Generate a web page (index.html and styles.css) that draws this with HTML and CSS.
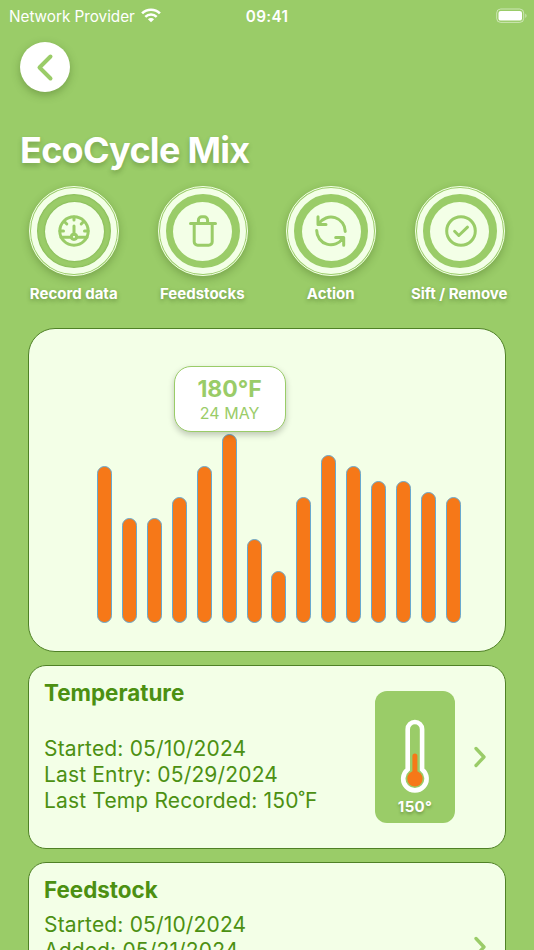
FILE: index.html
```html
<!DOCTYPE html>
<html lang="en">
<head>
  <meta charset="UTF-8" />
  <meta name="viewport" content="width=device-width, initial-scale=1.0"/>
  <title>EcoCycle Mix</title>
  <link rel="stylesheet" href="styles.css">
</head>
<body>

  <div class="status-bar">
    <div class="provider">
      <span>Network Provider</span>
      <svg class="wifi" viewBox="0 0 20 15" width="20" height="15">
        <path d="M1.1 5.4a12.7 12.7 0 0 1 17.8 0" fill="none" stroke="#fff" stroke-width="2.7"/>
        <path d="M4.3 8.8a8.2 8.2 0 0 1 11.4 0" fill="none" stroke="#fff" stroke-width="2.5"/>
        <path d="M10 14.3 6.9 11.3a4.4 4.4 0 0 1 6.2 0z" fill="#fff"/>
      </svg>
    </div>
    <div class="time">09:41</div>
    <svg class="battery" viewBox="0 0 32 16" width="32" height="16">
      <rect x="0.7" y="1" width="27" height="13.4" rx="4" fill="none" stroke="#fff" stroke-opacity=".5"/>
      <rect x="2.5" y="2.9" width="23.5" height="9.7" rx="2.2" fill="#fff"/>
      <path d="M29.3 5.5v4.4c1.7-.7 1.7-3.7 0-4.4z" fill="#fff" fill-opacity=".5"/>
    </svg>
  </div>

  <button class="back" aria-label="Back">
    <svg viewBox="0 0 50 50" width="50" height="50"><path d="M30.5 14.5 19.5 25.5 30.5 36.5"/></svg>
  </button>

  <h1>EcoCycle Mix</h1>

  <div class="actions">
    <div class="action">
      <div class="dial pressed"><div class="ring"><div class="disc">
        <svg class="icon" viewBox="0 0 32 32">
          <circle cx="16" cy="16" r="14.2"/>
          <path d="M3 22.2h10.3M18.7 22.2H29M16 11v8.5M16 2v3M6.8 7l2 2M25.2 7l-2 2M2 16h3.5M30 16h-3.5"/>
          <circle cx="16" cy="21.8" r="2.6"/>
        </svg>
      </div></div></div>
      <span>Record data</span>
    </div>
    <div class="action">
      <div class="dial"><div class="ring"><div class="disc">
        <svg class="icon" viewBox="0 0 32 32">
          <path d="M3.5 8.5h25M7.2 8.5v18.2a3.5 3.5 0 0 0 3.5 3.5h11a3.5 3.5 0 0 0 3.5-3.5V8.5M11.4 7.5V5.2a3.4 3.4 0 0 1 3.4-3.4h2.4a3.4 3.4 0 0 1 3.4 3.4v2.3"/>
        </svg>
      </div></div></div>
      <span>Feedstocks</span>
    </div>
    <div class="action">
      <div class="dial"><div class="ring"><div class="disc">
        <svg class="icon" viewBox="0 0 32 32">
          <path d="M3 1.8v7.7h8M4 8.7A14.2 14.2 0 0 1 30.2 16.5"/>
          <path d="M28.7 30.2v-7.7h-8M27.800 23.300A14.200 14.200 0 0 1 1.700 15.500"/>
        </svg>
      </div></div></div>
      <span>Action</span>
    </div>
    <div class="action">
      <div class="dial"><div class="ring"><div class="disc">
        <svg class="icon shifted" viewBox="0 0 32 32">
          <circle cx="16" cy="16" r="14.3"/>
          <path d="m9.6 16.3 4.2 4.2 8.7-8.3"/>
        </svg>
      </div></div></div>
      <span>Sift / Remove</span>
    </div>
  </div>

  <div class="card chart">
    <div class="bars">
      <div class="bar" style="height: 157px"></div>
      <div class="bar" style="height: 105px"></div>
      <div class="bar" style="height: 105px"></div>
      <div class="bar" style="height: 126px"></div>
      <div class="bar" style="height: 157px"></div>
      <div class="bar" style="height: 189px">
        <div class="tooltip"><strong>180°F</strong><span>24 MAY</span></div>
      </div>
      <div class="bar" style="height: 83.5px"></div>
      <div class="bar" style="height: 52px"></div>
      <div class="bar" style="height: 126px"></div>
      <div class="bar" style="height: 168px"></div>
      <div class="bar" style="height: 157px"></div>
      <div class="bar" style="height: 141.5px"></div>
      <div class="bar" style="height: 141.5px"></div>
      <div class="bar" style="height: 131px"></div>
      <div class="bar" style="height: 126px"></div>
    </div>
  </div>

  <div class="card entry temperature">
    <div class="info">
      <h2>Temperature</h2>
      <p>Started: 05/10/2024</p>
      <p>Last Entry: 05/29/2024</p>
      <p>Last Temp Recorded: 150˚F</p>
    </div>
    <div class="thermo">
      <svg viewBox="0 0 30 76" width="30" height="76">
        <path d="M7.7 51.5V11.2a7.2 7.2 0 0 1 14.4 0v40.3a11.7 11.7 0 1 1-14.4 0z" fill="none" stroke="#fff" stroke-width="4.6"/>
        <path d="M14.9 38v22" stroke="#f67818" stroke-width="5" stroke-linecap="round"/>
        <circle cx="14.9" cy="60.8" r="7.7" fill="#f67818"/>
      </svg>
      <span>150°</span>
    </div>
    <svg class="chevron" viewBox="0 0 12 22" width="12" height="22"><path d="m2 2.5 8 8.5-8 8.5"/></svg>
  </div>

  <div class="card entry feedstock">
    <div class="info">
      <h2>Feedstock</h2>
      <p>Started: 05/10/2024</p>
      <p>Added: 05/21/2024</p>
    </div>
    <svg class="chevron" viewBox="0 0 12 22" width="12" height="22"><path d="m2 2.5 8 8.5-8 8.5"/></svg>
  </div>

</body>
</html>
```

FILE: styles.css
```css
* { box-sizing: border-box; }
html { overflow: hidden; }
body { margin: 0; width: 534px; height: 950px; overflow: hidden; background: #9acc68; color: #fff; font-family: Inter, "Liberation Sans", sans-serif; }
h1, h2, p { margin: 0; }

.status-bar { display: grid; grid-template-columns: 1fr 60px 1fr; align-items: center; height: 32px; padding: 0 6px 0 9px; font-size: 15.3px; }
.provider { display: flex; align-items: center; gap: 6px; letter-spacing: -.03px; white-space: nowrap; }
.wifi { margin-top: -2px; }
.time { margin-left: -3px; text-align: center; font-weight: 600; letter-spacing: .3px; }
.battery { justify-self: end; }

.back { display: block; width: 50px; height: 50px; margin: 10px 0 0 20px; padding: 0; border: 0; border-radius: 50%; background: #fff; box-shadow: 0 3px 8px rgba(50, 80, 20, .35); }
.back svg { display: block; fill: none; stroke: #9acc68; stroke-width: 4; stroke-linecap: round; stroke-linejoin: round; }

h1 { margin: 36px 0 0 20px; font-size: 36px; line-height: 44px; font-weight: 700; letter-spacing: -.72px; text-shadow: 0 3px 5px rgba(50, 80, 20, .3); }

.actions { display: grid; grid-template-columns: repeat(4, 128.5px); margin: 14px 0 0 10px; }
.action { display: flex; flex-direction: column; align-items: center; }
.action > span { margin: 8px 0 0 -1px; font-size: 15px; line-height: 18px; font-weight: 700; white-space: nowrap; text-shadow: 0 2px 4px rgba(50, 80, 20, .4); }
.dial { display: flex; align-items: center; justify-content: center; width: 90px; height: 90px; margin-bottom: 1px; border: 1px solid #f3ffe7; border-radius: 50%; box-shadow: 0 3px 9px rgba(50, 80, 20, .32); }
.ring { display: flex; align-items: center; justify-content: center; width: 86px; height: 86px; border: 6px solid #f3ffe7; border-radius: 50%; }
.disc { display: flex; align-items: center; justify-content: center; width: 59px; height: 59px; border-radius: 50%; background: #f3ffe7; }
.pressed .ring { box-shadow: inset 0 0 2px rgba(50, 110, 10, .4); }
.pressed .disc { box-shadow: 0 0 2px rgba(50, 110, 10, .4); }
.icon { width: 32px; height: 32px; fill: none; stroke: #9acc68; stroke-width: 3; stroke-linecap: round; stroke-linejoin: round; }
.shifted { margin-left: 2px; }

.card { width: 478px; margin-left: 28px; border: 1.3px solid #4f8126; background: #f3ffe7; }
.chart { height: 324px; margin-top: 25px; padding: 0 43px 28.5px 68px; border-radius: 27px; }
.bars { display: flex; align-items: flex-end; justify-content: space-between; width: 364px; height: 100%; }
.bar { position: relative; width: 15px; border: 1.5px solid #68a9cf; border-radius: 8px; background: #f67818; }
.tooltip { position: absolute; left: -49px; bottom: 190px; display: flex; flex-direction: column; align-items: center; width: 112px; height: 66px; padding-top: 8px; border: 1.3px solid #9acc68; border-radius: 17px; background: #fff; color: #9acc68; box-shadow: 0 3px 6px rgba(0, 0, 0, .22); }
.tooltip strong { font-size: 23px; line-height: 28px; font-weight: 700; }
.tooltip span { font-size: 16px; line-height: 21px; }

.entry { display: flex; align-items: center; margin-top: 13px; border-radius: 18px; color: #4c9012; }
.info { align-self: flex-start; width: 331px; padding: 13px 0 0 15px; }
.info h2 { font-size: 22.4px; line-height: 28px; font-weight: 700; }
.info p { font-size: 21px; line-height: 26px; letter-spacing: .16px; white-space: nowrap; }
.temperature { height: 184px; }
.temperature h2 { margin-bottom: 29px; }
.feedstock { height: 170px; }
.feedstock h2 { margin-bottom: 8px; }
.thermo { display: flex; flex-direction: column; align-items: center; width: 80px; height: 132px; margin-left: 15px; padding-top: 27px; border-radius: 12px; background: #9acc68; color: #fff; }
.thermo span { margin-top: 4px; font-size: 15px; line-height: 18px; font-weight: 700; letter-spacing: .3px; text-shadow: 0 2px 3px rgba(50, 80, 20, .4); }
.chevron { margin: 0 19px 0 auto; fill: none; stroke: #9acc68; stroke-width: 3.3; stroke-linecap: round; stroke-linejoin: round; }
```
